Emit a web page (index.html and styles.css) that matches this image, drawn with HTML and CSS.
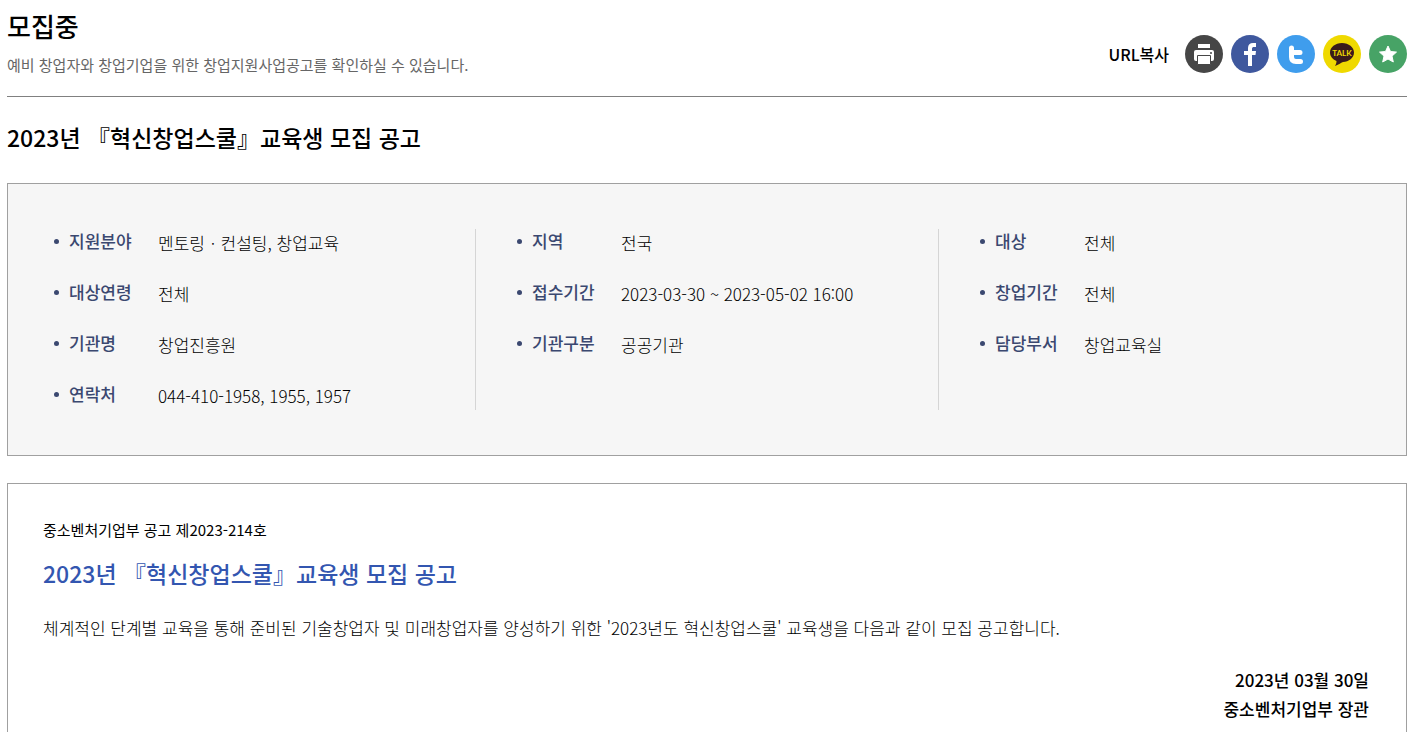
FILE: index.html
```html
<!DOCTYPE html>
<html lang="ko">

<head>
  <meta charset="UTF-8">
  <meta name="viewport" content="width=device-width, initial-scale=1.0">
  <title>모집중</title>
  <link rel="stylesheet" href="styles.css">
</head>

<body>

  <header class="page-header">
    <div class="page-title">
      <h1>모집중</h1>
      <p>예비 창업자와 창업기업을 위한 창업지원사업공고를 확인하실 수 있습니다.</p>
    </div>
    <div class="share">
      <button type="button" class="url-copy">URL복사</button>
      <button type="button" class="icon print" aria-label="인쇄">
        <svg viewBox="0 0 38 38">
          <path fill="#fff" d="M13 9h12v4H13z" />
          <rect x="9" y="15" width="20" height="11" rx="2" fill="#fff" />
          <path fill="#fff" stroke="#464646" d="M12.500 20.500h13v9h-13z" />
          <circle cx="26" cy="18" r="1" fill="#464646" />
        </svg>
      </button>
      <a href="#" class="icon facebook" aria-label="페이스북">
        <svg viewBox="0 0 38 38">
          <path fill="#fff" d="M17 31V20h-4v-4h4v-3c0-3.300 2-5 5-5h3v4h-2c-1.300 0-2 .6-2 2v2h4l-.5 4H21v11z" />
        </svg>
      </a>
      <a href="#" class="icon twitter" aria-label="트위터">
        <svg viewBox="0 0 38 38">
          <path fill="none" stroke="#fff" stroke-width="5" stroke-linecap="round" stroke-linejoin="round" d="M14.500 13v9c0 3 1.500 4.500 4.500 4.500h4.500M14.500 17.500h8.500" />
        </svg>
      </a>
      <a href="#" class="icon kakao" aria-label="카카오톡">
        <svg viewBox="0 0 38 38">
          <path fill="#391b1b" d="M19 8c6.800 0 12 4.300 12 9.500S25.800 27 20 27c-2 .8-5 3-8 4 1-1.700 1.500-3.500 1.500-5C9.500 24.300 7 21.200 7 17.500 7 12.300 12.200 8 19 8z" />
          <text x="19" y="21" class="talk">TALK</text>
        </svg>
      </a>
      <button type="button" class="icon favorite" aria-label="즐겨찾기">
        <svg viewBox="0 0 38 38">
          <path fill="#fff" stroke="#fff" stroke-linejoin="round" d="M19 11l2.500 5.500 6 .6-4.500 4 1.300 5.900-5.300-3-5.300 3 1.300-5.900-4.500-4 6-.6z" />
        </svg>
      </button>
    </div>
  </header>

  <main>
    <h2 class="notice-title">2023년 『혁신창업스쿨』교육생 모집 공고</h2>

    <section class="info">
      <dl class="info-col">
        <div class="row"><dt>지원분야</dt><dd>멘토링ㆍ컨설팅, 창업교육</dd></div>
        <div class="row"><dt>대상연령</dt><dd>전체</dd></div>
        <div class="row"><dt>기관명</dt><dd>창업진흥원</dd></div>
        <div class="row"><dt>연락처</dt><dd>044-410-1958, 1955, 1957</dd></div>
      </dl>
      <dl class="info-col">
        <div class="row"><dt>지역</dt><dd>전국</dd></div>
        <div class="row"><dt>접수기간</dt><dd>2023-03-30 ~ 2023-05-02 16:00</dd></div>
        <div class="row"><dt>기관구분</dt><dd>공공기관</dd></div>
      </dl>
      <dl class="info-col">
        <div class="row"><dt>대상</dt><dd>전체</dd></div>
        <div class="row"><dt>창업기간</dt><dd>전체</dd></div>
        <div class="row"><dt>담당부서</dt><dd>창업교육실</dd></div>
      </dl>
    </section>

    <article class="notice">
      <p class="notice-no">중소벤처기업부 공고 제2023-214호</p>
      <h3>2023년 『혁신창업스쿨』교육생 모집 공고</h3>
      <p class="notice-text">체계적인 단계별 교육을 통해 준비된 기술창업자 및 미래창업자를 양성하기 위한 '2023년도 혁신창업스쿨' 교육생을 다음과 같이 모집 공고합니다.</p>
      <p class="sign">2023년 03월 30일<br>중소벤처기업부 장관</p>
    </article>
  </main>

</body>

</html>
```
FILE: styles.css
```css
*,
*:before,
*:after {
  box-sizing: border-box;
}

body {
  margin: 0;
  padding: 0 9px 0 7px;
  font-family: "Noto Sans CJK KR", "Noto Sans", sans-serif;
  font-size: 17px;
  color: #000;
  background: #fff;
}

h1,
h2,
h3,
p,
dl,
dd {
  margin: 0;
}

/* header */
.page-header {
  display: flex;
  justify-content: space-between;
  align-items: flex-end;
  padding: 7px 0 20px;
  border-bottom: 1px solid #808080;
}

.page-title h1 {
  font-size: 26px;
  font-weight: 500;
  line-height: 38px;
}

.page-title p {
  margin-top: 9px;
  font-size: 15px;
  line-height: 22px;
  color: #666;
}

.share {
  display: flex;
  align-items: center;
  gap: 8px;
  padding-bottom: 3px;
}

.share button {
  border: 0;
  padding: 0;
  cursor: pointer;
}

.share .url-copy {
  margin-right: 8px;
  background: none;
  font-family: inherit;
  font-size: 16px;
  font-weight: 500;
  color: #000;
}

.icon {
  width: 38px;
  height: 38px;
  border-radius: 50%;
}

.icon svg {
  display: block;
  width: 38px;
  height: 38px;
}

.share .print {
  background: #464646;
}

.facebook {
  background: #3f589e;
}

.twitter {
  background: #3f9ded;
}

.kakao {
  background: #efd900;
}

.share .favorite {
  background: #47a366;
}

.talk {
  font-family: Lato, sans-serif;
  font-size: 8px;
  font-weight: bold;
  text-anchor: middle;
  fill: #efd900;
}

/* title */
.notice-title {
  padding: 23px 0 29px;
  font-size: 23px;
  font-weight: 500;
  line-height: 34px;
}

/* summary box */
.info {
  display: grid;
  grid-template-columns: repeat(3, 1fr);
  padding: 45px 4px 45px 5px;
  border: 1px solid #a0a0a0;
  background: #f6f6f6;
}

.info-col {
  display: flex;
  flex-direction: column;
  gap: 23px;
  padding-left: 41px;
  border-right: 1px solid #d5d5d5;
}

.info-col:last-child {
  border-right: 0;
}

.row {
  display: flex;
  line-height: 28px;
}

.row dt {
  display: flex;
  align-items: center;
  gap: 10px;
  width: 104px;
  height: 24px;
  font-weight: 500;
  color: #3b4870;
}

.row dt:before {
  content: "";
  width: 5px;
  height: 5px;
  border-radius: 50%;
  background: #3b4870;
}

.row dd {
  font-weight: 300;
}

/* notice body */
.notice {
  margin-top: 27px;
  padding: 35px 37px 40px 35px;
  border: 1px solid #a0a0a0;
}

.notice-no {
  font-size: 15px;
  line-height: 22px;
}

.notice h3 {
  margin-top: 15px;
  font-size: 23px;
  font-weight: 500;
  line-height: 34px;
  color: #3356b0;
}

.notice-text {
  margin-top: 24px;
  font-weight: 300;
  line-height: 28px;
}

.sign {
  margin-top: 23px;
  font-weight: 500;
  line-height: 29px;
  text-align: right;
}
```
